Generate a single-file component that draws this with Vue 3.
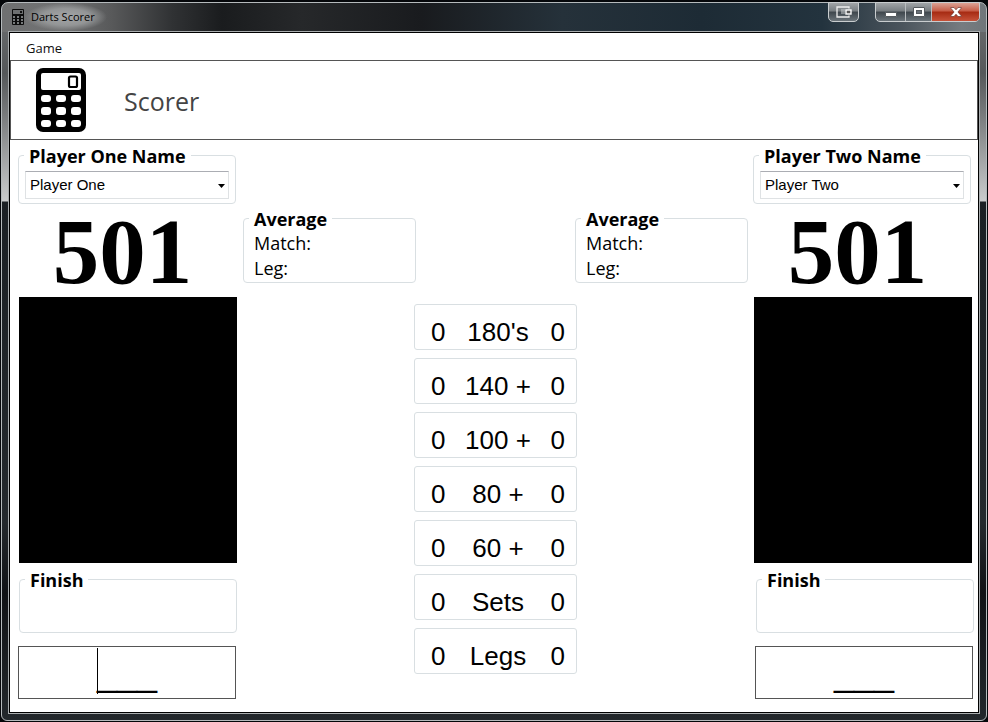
<script setup>
import { reactive, ref } from 'vue'

const players = reactive([
  { id: 'one', title: 'Player One Name', name: 'Player One', score: 501, entry: '___', active: true },
  { id: 'two', title: 'Player Two Name', name: 'Player Two', score: 501, entry: '___', active: false }
])

const tallies = ref([
  { label: "180's", one: 0, two: 0 },
  { label: '140 +', one: 0, two: 0 },
  { label: '100 +', one: 0, two: 0 },
  { label: '80 +', one: 0, two: 0 },
  { label: '60 +', one: 0, two: 0 },
  { label: 'Sets', one: 0, two: 0 },
  { label: 'Legs', one: 0, two: 0 }
])
</script>

<template>
  <div class="window">
    <header class="titlebar">
      <svg class="app-icon" viewBox="0 0 12 16" aria-hidden="true">
        <rect width="12" height="16" rx="1" fill="#0c0c0c" />
        <rect x="1" y="1" width="10" height="4" fill="#6d6f70" />
        <rect x="8" y="2" width="2" height="2" fill="#111" />
        <g fill="#777a7b">
          <rect x="1" y="7" width="2" height="2" /><rect x="5" y="7" width="2" height="2" /><rect x="9" y="7" width="2" height="2" />
          <rect x="1" y="10" width="2" height="2" /><rect x="5" y="10" width="2" height="2" /><rect x="9" y="10" width="2" height="2" />
          <rect x="1" y="13" width="2" height="2" /><rect x="5" y="13" width="2" height="2" /><rect x="9" y="13" width="2" height="2" />
        </g>
      </svg>
      <span class="caption">Darts Scorer</span>
      <div class="controls">
        <div class="control-set">
          <button class="control control--dock" type="button" aria-label="Dock">
            <svg width="16" height="12" viewBox="0 0 16 12">
              <path d="M13 2.5V1H1v10h12V9.5" fill="none" stroke="#eee" stroke-width="1.3" />
              <path d="M6 3v5M8 3v5" stroke="#c8ccce" stroke-width="1" />
              <rect x="10" y="4" width="5" height="4" fill="#555" stroke="#fff" stroke-width="1.4" />
            </svg>
          </button>
        </div>
        <div class="control-set">
          <button class="control control--min" type="button" aria-label="Minimize">
            <svg width="12" height="12" viewBox="0 0 12 12"><rect x=".5" y="6.500" width="11" height="4" rx=".5" fill="#fff" stroke="#555a5e" /></svg>
          </button>
          <button class="control control--max" type="button" aria-label="Maximize">
            <svg width="12" height="10" viewBox="0 0 12 10">
              <rect x=".5" y=".5" width="11" height="9" rx=".5" fill="#fff" stroke="#555a5e" />
              <rect x="3.500" y="3.500" width="5" height="3" fill="#697077" stroke="#555a5e" />
            </svg>
          </button>
          <button class="control control--close" type="button" aria-label="Close">
            <svg width="12" height="10" viewBox="0 0 12 10">
              <path d="M.7.5H4l2 2.300L8 .5h3.300v.6L7.900 5l3.400 3.900v.6H8L6 7.200 4 9.500H.7v-.6L4.100 5 .7 1.100Z" fill="#fff" stroke="#6b3833" stroke-width=".7" />
            </svg>
          </button>
        </div>
      </div>
    </header>

    <main class="client">
      <nav class="menubar"><button class="menu" type="button">Game</button></nav>

      <div class="banner">
        <svg class="logo" viewBox="0 0 50 64" aria-hidden="true">
          <rect width="50" height="64" rx="7" />
          <rect x="5" y="5" width="40" height="17" rx="2" fill="#fff" />
          <rect x="33" y="8.500" width="8" height="10.500" rx="1.500" fill="none" stroke="#000" stroke-width="2.200" />
          <g fill="#fff">
            <rect x="5" y="27" width="10" height="7" rx="3" /><rect x="20" y="27" width="10" height="7" rx="3" /><rect x="35" y="27" width="10" height="7" rx="3" />
            <rect x="5" y="39" width="10" height="8" rx="3" /><rect x="20" y="39" width="10" height="8" rx="3" /><rect x="35" y="39" width="10" height="8" rx="3" />
            <rect x="5" y="52" width="10" height="7" rx="3" /><rect x="20" y="52" width="10" height="7" rx="3" /><rect x="35" y="52" width="10" height="7" rx="3" />
          </g>
        </svg>
        <h1 class="heading">Scorer</h1>
      </div>

      <div class="board">
        <section v-for="p in players" :key="p.id" :class="['player', 'player--' + p.id]">
          <div class="upper">
            <fieldset class="group group--name">
              <legend>{{ p.title }}</legend>
              <div class="combo">
                <select v-model="p.name" :aria-label="p.title">
                  <option>{{ p.name }}</option>
                </select>
                <svg class="arrow" width="7" height="4" viewBox="0 0 7 4" aria-hidden="true"><path d="M0 0h7L3.500 4Z" /></svg>
              </div>
            </fieldset>
            <div class="score">{{ p.score }}</div>
            <div class="history"></div>
          </div>
          <div class="lower">
            <fieldset class="group group--finish">
              <legend>Finish</legend>
            </fieldset>
            <div class="entry">
              <input v-model="p.entry" type="text" :aria-label="p.name + ' score'" />
              <span v-if="p.active" class="caret"></span>
            </div>
          </div>
        </section>

        <section class="middle">
          <div class="averages">
            <fieldset v-for="p in players" :key="p.id" class="group group--average">
              <legend>Average</legend>
              <div class="stat">Match:</div>
              <div class="stat">Leg:</div>
            </fieldset>
          </div>
          <div class="tallies">
            <div v-for="t in tallies" :key="t.label" class="tally">
              <span>{{ t.one }}</span>
              <span class="tally-label">{{ t.label }}</span>
              <span>{{ t.two }}</span>
            </div>
          </div>
        </section>
      </div>
    </main>
  </div>
</template>

<style>
body {
  margin: 0;
  background: #05070a;
}
</style>

<style scoped>
* {
  box-sizing: border-box;
}
.window {
  font-family: "Open Sans", "Noto Sans", sans-serif;
  display: flex;
  flex-direction: column;
  min-height: calc(100vh - 3px);
  margin: 2px 1px 1px;
  padding: 0 6px 6px;
  border: 1px solid #b5babc;
  border-radius: 7px 7px 6px 6px;
  background:
    linear-gradient(90deg, #6f7071 0, #707172 60px, #58595a 110px, #303234 170px, #1a1c1e 220px, #26282a 300px, #191b1e 420px, #25313a 560px, #1d2b35 700px, #23333e 820px, #4a545c 900px, #767c80 960px, #70767a 100%) 0 0 / 100% 29px no-repeat,
    linear-gradient(#6f7173 0, #55585a 70px, #77797b 110px, #c9cbcc 198px, #1b2024 199px, #24292d 520px, #101215 590px, #23282c 100%);
}
.titlebar {
  display: flex;
  align-items: flex-start;
  height: 28px;
  padding-left: 4px;
}
.app-icon {
  width: 12px;
  height: 16px;
  margin-top: 6px;
}
.caption {
  margin-left: 1px;
  padding: 0 12px 0 6px;
  font-size: 11px;
  line-height: 28px;
  color: #000;
  background: radial-gradient(closest-side, #a4a6a7 0, #939596 60%, transparent 100%);
}
.controls {
  display: flex;
  gap: 16px;
  margin: -1px 0 0 auto;
}
.control-set {
  display: flex;
  height: 20px;
  border: 1px solid #c9cdcf;
  border-radius: 0 0 5px 5px;
  overflow: hidden;
  background: linear-gradient(#a0a4a7 0, #777d81 45%, #3e464c 50%, #6b747a 100%);
}
.control {
  display: flex;
  align-items: center;
  justify-content: center;
  width: 29px;
  padding: 0;
  border: 0;
  background: none;
}
.control + .control {
  border-left: 1px solid #b9bdc0;
}
.control--max {
  width: 26px;
}
.control--close {
  width: 48px;
  background: linear-gradient(#dba295 0, #c65b45 45%, #a62a12 50%, #c6533a 100%);
}
.client {
  flex: 1;
  border: 1px solid #000;
  outline: 1px solid #a9adaf;
  margin: 1px 1px 1px;
  background: #fff;
  color: #000;
}
.menubar {
  display: flex;
  height: 27px;
  padding-left: 10px;
}
.menu {
  padding: 2px 6px 0;
  border: 0;
  background: none;
  font-family: inherit;
  font-size: 13px;
  color: #111;
}
.banner {
  display: flex;
  align-items: center;
  height: 80px;
  padding-left: 25px;
  border: 1px solid #555;
}
.logo {
  width: 50px;
  height: 64px;
}
.heading {
  margin: 2px 0 0 38px;
  font-size: 25px;
  font-weight: 400;
  line-height: 36px;
  color: #444;
}
.board {
  display: grid;
  grid-template-columns: 219px 1fr 221px;
  padding: 4px 4px 13px 8px;
}
.player,
.middle {
  grid-row: 1;
}
.player--one {
  grid-column: 1;
}
.player--two {
  grid-column: 3;
}
.player--two .upper {
  padding-right: 2px;
}
.player--two .lower {
  padding-left: 2px;
}
.middle {
  grid-column: 2;
  padding: 63px 5px 0 6px;
}
.group {
  min-width: 0;
  margin: 0;
  padding: 0 5px;
  border: 1px solid #d9dfe2;
  border-radius: 4px;
}
legend {
  padding: 2px 5px 0;
  font-size: 18px;
  font-weight: 700;
  line-height: 20px;
}
.group--name {
  height: 60px;
  margin-right: 1px;
}
.combo {
  position: relative;
  margin: 5px 1px 0;
}
select {
  display: block;
  width: 100%;
  height: 28px;
  padding: 0 4px 2px;
  border: 1px solid #dfe2e4;
  border-top-color: #abadb3;
  border-radius: 0;
  appearance: none;
  background: #fff;
  font-family: "Liberation Sans", Arial, sans-serif;
  font-size: 15px;
  color: #000;
}
.arrow {
  position: absolute;
  top: 13px;
  right: 4px;
  pointer-events: none;
}
.score {
  padding: 2px 10px 0 0;
  font-family: "Liberation Serif", "Times New Roman", serif;
  font-size: 93px;
  font-weight: 700;
  line-height: 91px;
  text-align: center;
}
.history {
  height: 266px;
  margin-left: 1px;
  background: #000;
}
.lower {
  padding-top: 5px;
}
.group--finish {
  height: 65px;
  margin-left: 1px;
}
.entry {
  position: relative;
  margin: 13px 1px 0 0;
}
input {
  display: block;
  width: 100%;
  height: 53px;
  padding: 2px 0 0;
  border: 1px solid #555;
  background: #fff;
  font-family: "Liberation Sans", Arial, sans-serif;
  font-size: 36px;
  text-align: center;
  color: #000;
}
.caret {
  position: absolute;
  top: 2px;
  left: calc(50% - 30px);
  width: 1px;
  height: 46px;
  background: #000;
}
.averages {
  display: flex;
  justify-content: space-between;
}
.group--average {
  width: 173px;
  height: 76px;
  padding-top: 2px;
}
.stat {
  padding-left: 5px;
  font-size: 18px;
  line-height: 25px;
}
.tallies {
  display: flex;
  flex-direction: column;
  align-items: center;
  gap: 8px;
  margin-top: 21px;
}
.tally {
  display: flex;
  align-items: center;
  justify-content: space-between;
  width: 163px;
  height: 46px;
  padding: 10px 11px 0 16px;
  border: 1px solid #d9dfe2;
  border-radius: 3px;
  font-family: "Liberation Sans", Arial, sans-serif;
  font-size: 26px;
}
</style>
